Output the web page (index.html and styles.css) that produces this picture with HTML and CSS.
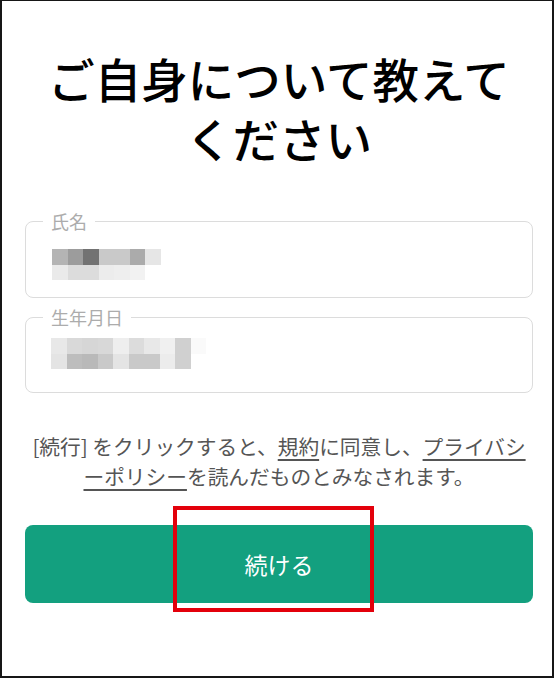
FILE: index.html
```html
<!DOCTYPE html>
<html lang="ja">
<head>
  <meta charset="UTF-8" />
  <meta name="viewport" content="width=device-width, initial-scale=1.0"/>
  <title>ご自身について教えてください</title>
  <link rel="stylesheet" href="styles.css">
</head>
<body>
  <div class="frame">
    <h1 class="title">ご自身について教えて<br>ください</h1>

    <div class="field">
      <span class="field-label">氏名</span>
      <div class="mosaic">
        <div class="mosaic-row">
          <span class="cb4"></span><span class="c9c"></span><span class="c72"></span><span class="cc9"></span><span class="cc9"></span><span class="cab"></span><span class="ce6"></span>
        </div>
        <div class="mosaic-row">
          <span class="cea"></span><span class="cdc"></span><span class="cdc"></span><span class="cec"></span><span class="cee"></span><span class="cf2"></span>
        </div>
      </div>
    </div>

    <div class="field field-date">
      <span class="field-label">生年月日</span>
      <div class="mosaic">
        <div class="mosaic-row">
          <span class="ce8"></span><span class="cd9"></span><span class="cd6"></span><span class="cd8"></span><span class="cee"></span><span class="cdc"></span><span class="ce8"></span><span class="cf0"></span><span class="cd0"></span><span class="cfa"></span>
        </div>
        <div class="mosaic-row">
          <span class="ce4"></span><span class="cbd"></span><span class="cb9"></span><span class="cc9"></span><span class="ce4"></span><span class="cc9"></span><span class="cc9"></span><span class="cec"></span><span class="cd0"></span>
        </div>
      </div>
    </div>

    <p class="terms">[続行] をクリックすると、<a href="#">規約</a>に同意し、<a href="#">プライバシーポリシー</a>を読んだものとみなされます。</p>

    <div class="button-wrap">
      <button class="continue">続ける</button>
      <div class="highlight"></div>
    </div>
  </div>
</body>
</html>
```

FILE: styles.css
```css
body {
  margin: 0;
  background: #fff;
  font-family: "Noto Sans CJK JP", "Noto Sans", sans-serif;
  color: #111;
}
.frame {
  box-sizing: border-box;
  width: 554px;
  height: 678px;
  border: 2px solid #161616;
  border-top-width: 1px;
  padding: 0 19px 0 23px;
  overflow: hidden;
}
.title {
  margin: 47px 0 0;
  font-size: 46.5px;
  line-height: 60px;
  font-weight: 500;
  text-align: center;
  color: #000;
}
.field {
  position: relative;
  height: 77px;
  box-sizing: border-box;
  margin-top: 53px;
  border: 1.5px solid #dcdcdc;
  border-radius: 8px;
  padding: 27px 0 0 26px;
}
.field-date {
  margin-top: 19px;
  height: 76px;
  padding-top: 20px;
  padding-left: 25px;
}
.field-label {
  position: absolute;
  top: -13px;
  left: 17px;
  padding: 0 8px;
  background: #fff;
  font-size: 18px;
  line-height: 24px;
  color: #acacac;
}
.mosaic-row {
  display: flex;
}
.mosaic-row span {
  width: 15.5px;
  height: 15.5px;
}
.cb4 { background: #b4b4b4; }
.c9c { background: #9c9c9c; }
.c72 { background: #727272; }
.cc9 { background: #c9c9c9; }
.cab { background: #ababab; }
.ce6 { background: #e6e6e6; }
.cea { background: #eaeaea; }
.cdc { background: #dcdcdc; }
.cec { background: #ececec; }
.cee { background: #eeeeee; }
.cf2 { background: #f2f2f2; }
.ce8 { background: #e8e8e8; }
.cd9 { background: #d9d9d9; }
.cd6 { background: #d6d6d6; }
.cd8 { background: #d8d8d8; }
.cf0 { background: #f0f0f0; }
.cd0 { background: #d0d0d0; }
.cfa { background: #fafafa; }
.ce4 { background: #e4e4e4; }
.cbd { background: #bdbdbd; }
.cb9 { background: #b9b9b9; }
.terms {
  margin: 38px 0 0;
  padding: 0 4px;
  font-size: 20.7px;
  line-height: 30px;
  color: #555;
  text-align: center;
}
.terms a {
  color: #555;
  text-decoration: underline;
  text-underline-offset: 4px;
}
.button-wrap {
  position: relative;
  margin-top: 34px;
}
.continue {
  display: block;
  width: 100%;
  height: 78px;
  border: none;
  border-radius: 8px;
  background: #13a07f;
  color: #fff;
  font-family: inherit;
  font-size: 23px;
  cursor: pointer;
}
.highlight {
  position: absolute;
  left: 148px;
  top: -19px;
  width: 201px;
  height: 106px;
  box-sizing: border-box;
  border: 4px solid #e3000b;
}
```
